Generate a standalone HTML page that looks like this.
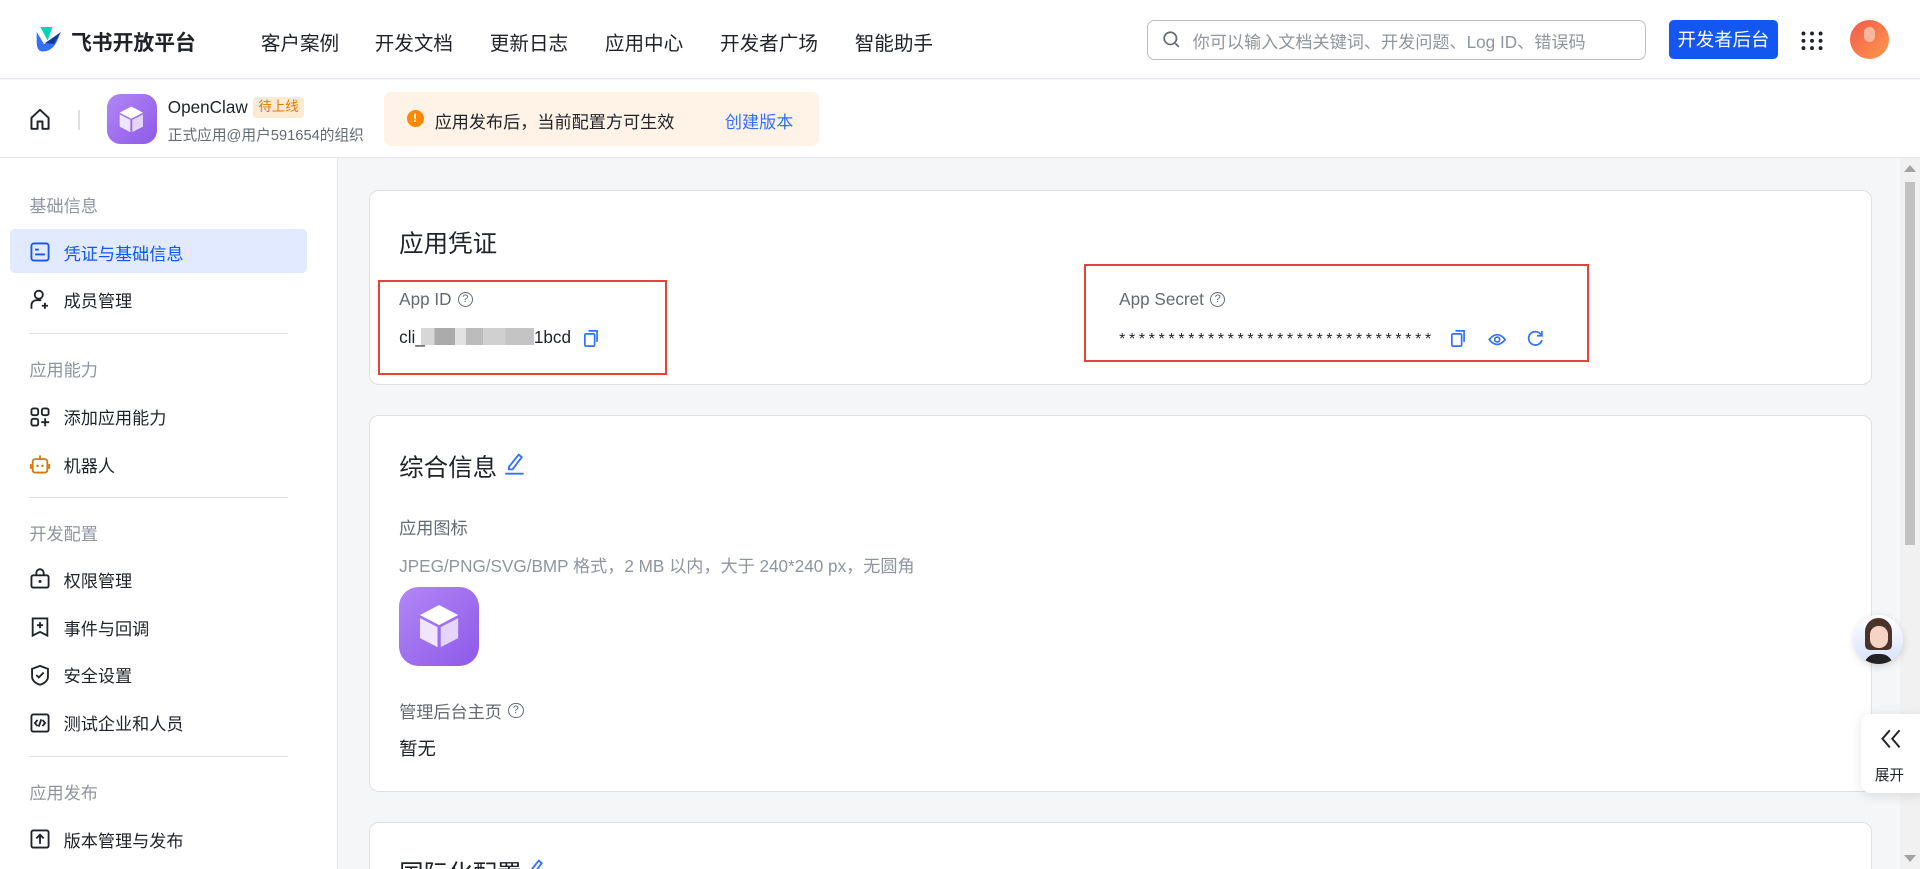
<!DOCTYPE html>
<html><head><meta charset="utf-8"><style>
html,body{margin:0;padding:0;overflow:hidden;width:1920px;height:869px;background:#f5f6f7}
#r{zoom:1.22449;position:relative;width:1568px;height:709.5px;overflow:hidden;font-family:"Liberation Sans","Noto Sans CJK SC",sans-serif;color:#1f2329}
.a{position:absolute}
.hdr{left:0;top:0;width:1568px;height:64px;background:#fff;border-bottom:1px solid #e5e6eb}
.nav{top:22px;font-size:16px;color:#1f2329}
.bar2{left:0;top:65px;width:1568px;height:63px;background:#fff;border-bottom:1px solid #e5e6eb}
.side{left:0;top:129px;width:275px;height:581px;background:#fff;border-right:1px solid #e5e6eb}
.sec{left:24px;font-size:14px;color:#8f959e}
.it{left:24px;font-size:14px;color:#1f2329;display:flex;align-items:center}
.it svg{margin-right:10px}
.dv{left:24px;width:211px;height:1px;background:#dee0e3}
.card{left:301px;width:1226px;background:#fff;border:1px solid #dee0e3;border-radius:8px}
.t{font-size:20px;color:#1f2329}
.lab{font-size:14px;color:#646a73;display:flex;align-items:center}
.red{border:2px solid #e8423a;box-sizing:border-box}
.q{display:inline-block;width:11px;height:11px;border:1.3px solid #646a73;border-radius:50%;font-size:9px;line-height:11px;text-align:center;margin-left:5px;color:#646a73}
</style></head><body><div id="r">
<div class="a hdr"></div>
<svg class="a" style="left:27px;top:22px" width="24" height="22" viewBox="0 0 24 22"><path d="M3 4 L9 14 L22 5 Q18 20 8 20 Q3 20 3 12Z" fill="#3370ff"/><path d="M6 0 L16 0 L12 11 Z" fill="#00d6b9"/><path d="M10 13 L23 4 L17 14Z" fill="#133c9a"/></svg>
<div class="a" style="left:58px;top:21px;font-size:17px;font-weight:bold">飞书开放平台</div>
<div class="a nav" style="left:213px">客户案例</div>
<div class="a nav" style="left:306px">开发文档</div>
<div class="a nav" style="left:400px">更新日志</div>
<div class="a nav" style="left:494px">应用中心</div>
<div class="a nav" style="left:588px">开发者广场</div>
<div class="a nav" style="left:698px">智能助手</div>
<div class="a" style="left:937px;top:16px;width:406px;height:31px;border:1px solid #bbbfc4;border-radius:6px;background:#fff"></div>
<svg class="a" style="left:950px;top:25px" width="14" height="14" viewBox="0 0 14 14"><circle cx="6" cy="6" r="5" fill="none" stroke="#646a73" stroke-width="1.4"/><path d="M10 10 L13 13" stroke="#646a73" stroke-width="1.4"/></svg>
<div class="a" style="left:974px;top:23px;font-size:14px;color:#8f959e">你可以输入文档关键词、开发问题、Log ID、错误码</div>
<div class="a" style="left:1363px;top:16px;width:89px;height:32px;background:#1456f0;border-radius:4px;color:#fff;font-size:15px;line-height:32px;text-align:center">开发者后台</div>
<svg class="a" style="left:1471px;top:25px" width="18" height="16" viewBox="0 0 18 16"><g fill="#1f2329"><circle cx="2" cy="2" r="1.6"/><circle cx="9" cy="2" r="1.6"/><circle cx="16" cy="2" r="1.6"/><circle cx="2" cy="8" r="1.6"/><circle cx="9" cy="8" r="1.6"/><circle cx="16" cy="8" r="1.6"/><circle cx="2" cy="14" r="1.6"/><circle cx="9" cy="14" r="1.6"/><circle cx="16" cy="14" r="1.6"/></g></svg>
<div class="a" style="left:1511px;top:16px;width:32px;height:32px;border-radius:50%;background:linear-gradient(135deg,#f4584a,#fd9b4e)"><div style="margin:6px auto 0;width:9px;height:12px;border-radius:5px;background:#fbb79e"></div></div>

<div class="a bar2"></div>
<svg class="a" style="left:24px;top:88px" width="18" height="19" viewBox="0 0 18 19"><path d="M2 8 L9 1.5 L16 8 V17 H11 V11 H7 V17 H2Z" fill="none" stroke="#1f2329" stroke-width="1.6" stroke-linejoin="round"/></svg>
<div class="a" style="left:64px;top:90px;width:1px;height:16px;background:#dee0e3"></div>
<div class="a" style="left:87px;top:77px;width:41px;height:41px;border-radius:11px;background:linear-gradient(135deg,#b187f5,#8e59e8)"></div>
<svg class="a" style="left:95px;top:85px" width="25" height="25" viewBox="0 0 25 25"><path d="M12.5 2 L22 7 L12.5 12 L3 7Z" fill="#fff"/><path d="M3 8.5 L11.7 13 V23 L3 18.5Z" fill="#efe6fd"/><path d="M22 8.5 L13.3 13 V23 L22 18.5Z" fill="#e4d6fb"/></svg>
<div class="a" style="left:137px;top:79px;font-size:14px">OpenClaw</div>
<div class="a" style="left:207px;top:79px;padding:0 4px;background:#feead2;color:#de7802;font-size:11px;line-height:17px;border-radius:3px">待上线</div>
<div class="a" style="left:137px;top:101px;font-size:12px;color:#646a73">正式应用@用户591654的组织</div>
<div class="a" style="left:314px;top:75px;width:355px;height:44px;background:#fef3e6;border-radius:6px"></div>
<div class="a" style="left:332px;top:90px;width:14px;height:14px;border-radius:50%;background:#ff8800;color:#fff;font-size:10px;line-height:14px;text-align:center;font-weight:bold">!</div>
<div class="a" style="left:355px;top:88px;font-size:14px">应用发布后，当前配置方可生效</div>
<div class="a" style="left:592px;top:88px;font-size:14px;color:#3370ff">创建版本</div>

<div class="a side"></div>
<div class="a sec" style="top:157px">基础信息</div>
<div class="a" style="left:8px;top:187px;width:243px;height:36px;background:#e1eaff;border-radius:4px"></div>
<div class="a it" style="top:196px;color:#1456f0"><svg width="18" height="18" viewBox="0 0 18 18"><rect x="2" y="2" width="14" height="14" rx="2" fill="none" stroke="#1456f0" stroke-width="1.5"/><path d="M5 7h3M5 11h8" stroke="#1456f0" stroke-width="1.5"/></svg>凭证与基础信息</div>
<div class="a it" style="top:234px"><svg width="18" height="18" viewBox="0 0 18 18"><circle cx="8" cy="5.5" r="3.3" fill="none" stroke="#1f2329" stroke-width="1.5"/><path d="M2 17v-3a4 4 0 0 1 4-4h4M13 12v5M10.5 14.5h5" fill="none" stroke="#1f2329" stroke-width="1.5"/></svg>成员管理</div>
<div class="a dv" style="top:272px"></div>
<div class="a sec" style="top:291px">应用能力</div>
<div class="a it" style="top:330px"><svg width="18" height="18" viewBox="0 0 18 18"><g fill="none" stroke="#1f2329" stroke-width="1.5"><rect x="2" y="2" width="5.5" height="5.5" rx="1.5"/><rect x="10.5" y="2" width="5.5" height="5.5" rx="1.5"/><rect x="2" y="10.5" width="5.5" height="5.5" rx="1.5"/><path d="M13.2 10v6.5M10 13.2h6.5"/></g></svg>添加应用能力</div>
<div class="a it" style="top:369px"><svg width="18" height="18" viewBox="0 0 18 18"><g fill="none" stroke="#d6780a" stroke-width="1.5"><rect x="3" y="5" width="12" height="11" rx="2"/><path d="M9 2v3M1.5 9v4M16.5 9v4"/></g><circle cx="7" cy="10.5" r="1" fill="#d6780a"/><circle cx="11" cy="10.5" r="1" fill="#d6780a"/></svg>机器人</div>
<div class="a dv" style="top:406px"></div>
<div class="a sec" style="top:425px">开发配置</div>
<div class="a it" style="top:463px"><svg width="18" height="18" viewBox="0 0 18 18"><g fill="none" stroke="#1f2329" stroke-width="1.5"><rect x="2" y="6" width="14" height="10" rx="1.5"/><path d="M6 6V4a3 3 0 0 1 6 0v2"/></g><circle cx="9" cy="11" r="1.2" fill="#1f2329"/></svg>权限管理</div>
<div class="a it" style="top:502px"><svg width="18" height="18" viewBox="0 0 18 18"><g fill="none" stroke="#1f2329" stroke-width="1.5"><path d="M3 2h12v14l-6-3-6 3z"/><path d="M9 5v5M6.5 7.5h5"/></g></svg>事件与回调</div>
<div class="a it" style="top:541px"><svg width="18" height="18" viewBox="0 0 18 18"><g fill="none" stroke="#1f2329" stroke-width="1.5"><path d="M9 1.5l6.5 2.5v6c0 4-3.5 6-6.5 7-3-1-6.5-3-6.5-7V4z"/><path d="M6 9l2 2 4-4"/></g></svg>安全设置</div>
<div class="a it" style="top:580px"><svg width="18" height="18" viewBox="0 0 18 18"><g fill="none" stroke="#1f2329" stroke-width="1.5"><rect x="2" y="2" width="14" height="14" rx="1.5"/><path d="M7 6.5L4.8 9 7 11.5M11 6.5l2.2 2.5-2.2 2.5M10 6l-2 6"/></g></svg>测试企业和人员</div>
<div class="a dv" style="top:617px"></div>
<div class="a sec" style="top:636px">应用发布</div>
<div class="a it" style="top:675px"><svg width="18" height="18" viewBox="0 0 18 18"><g fill="none" stroke="#1f2329" stroke-width="1.5"><rect x="2" y="2" width="14" height="14" rx="1.5"/><path d="M9 13V6M6 8.5L9 5.5l3 3"/></g></svg>版本管理与发布</div>

<div class="a card" style="top:155px;height:158px"></div>
<div class="a t" style="left:326px;top:184px">应用凭证</div>
<div class="a red" style="left:309px;top:229px;width:236px;height:77px"></div>
<div class="a lab" style="left:326px;top:236px">App ID<span class="q">?</span></div>
<div class="a" style="left:326px;top:267px;font-size:14px">cli_</div>
<div class="a" style="left:344px;top:268px;width:92px;height:14px;background:linear-gradient(90deg,#d7d7d7 0 12%,#ababab 12% 30%,#e2e2e2 30% 40%,#bcbcbc 40% 55%,#d0d0d0 55% 75%,#c4c4c4 75% 100%)"></div>
<div class="a" style="left:436px;top:267px;font-size:14px">1bcd</div>
<svg class="a" style="left:476px;top:269px" width="14" height="15" viewBox="0 0 14 15"><g fill="none" stroke="#3370ff" stroke-width="1.4"><rect x="1.5" y="4" width="8" height="10" rx="1"/><path d="M4.5 1.5h7v9"/></g></svg>
<div class="a red" style="left:885px;top:216px;width:413px;height:80px"></div>
<div class="a lab" style="left:914px;top:236px">App Secret<span class="q">?</span></div>
<div class="a" style="left:914px;top:270px;font-size:13px;letter-spacing:3px;color:#1f2329">********************************</div>
<svg class="a" style="left:1184px;top:269px" width="14" height="15" viewBox="0 0 14 15"><g fill="none" stroke="#3370ff" stroke-width="1.4"><rect x="1.5" y="4" width="8" height="10" rx="1"/><path d="M4.5 1.5h7v9"/></g></svg>
<svg class="a" style="left:1215px;top:270px" width="15" height="14" viewBox="0 0 15 14"><g fill="none" stroke="#3370ff" stroke-width="1.4"><path d="M1 7Q7.5-1 14 7Q7.5 15 1 7Z"/><circle cx="7.5" cy="7" r="2"/></g></svg>
<svg class="a" style="left:1246px;top:269px" width="15" height="15" viewBox="0 0 15 15"><g fill="none" stroke="#3370ff" stroke-width="1.4"><path d="M12.5 5A5.5 5.5 0 1 0 13 9"/><path d="M13 1.5V5.5H9"/></g></svg>

<div class="a card" style="top:339px;height:306px"></div>
<div class="a t" style="left:326px;top:367px">综合信息</div>
<svg class="a" style="left:412px;top:368px" width="18" height="20" viewBox="0 0 18 20"><g fill="none" stroke="#3370ff" stroke-width="1.5"><path d="M4 13L12 3l2.5 2L7 15H4z"/><path d="M1 18.5h15"/></g></svg>
<div class="a" style="left:326px;top:420px;font-size:14px;color:#646a73">应用图标</div>
<div class="a" style="left:326px;top:451px;font-size:14px;color:#8f959e">JPEG/PNG/SVG/BMP 格式，2 MB 以内，大于 240*240 px，无圆角</div>
<div class="a" style="left:326px;top:479px;width:65px;height:65px;border-radius:16px;background:linear-gradient(135deg,#b187f5,#8e59e8)"></div>
<svg class="a" style="left:338px;top:491px" width="41" height="41" viewBox="0 0 25 25"><path d="M12.5 2 L22 7 L12.5 12 L3 7Z" fill="#fff"/><path d="M3 8.5 L11.7 13 V23 L3 18.5Z" fill="#efe6fd"/><path d="M22 8.5 L13.3 13 V23 L22 18.5Z" fill="#e4d6fb"/></svg>
<div class="a lab" style="left:326px;top:570px">管理后台主页<span class="q">?</span></div>
<div class="a" style="left:326px;top:600px;font-size:15px">暂无</div>

<div class="a card" style="top:671px;height:100px"></div>
<div class="a t" style="left:326px;top:698px">国际化配置</div>
<svg class="a" style="left:428px;top:700px" width="18" height="20" viewBox="0 0 18 20"><path d="M4 13L12 3l2.5 2L7 15H4z" fill="none" stroke="#3370ff" stroke-width="1.5"/></svg>

<div class="a" style="left:1552px;top:129px;width:16px;height:581px;background:#f1f1f1"></div>
<div class="a" style="left:1556px;top:149px;width:8px;height:296px;background:#c1c1c1"></div>
<div class="a" style="left:1555px;top:135px;width:0;height:0;border-left:5px solid transparent;border-right:5px solid transparent;border-bottom:6px solid #a3a3a3"></div>
<div class="a" style="left:1555px;top:698px;width:0;height:0;border-left:5px solid transparent;border-right:5px solid transparent;border-top:6px solid #a3a3a3"></div>

<div class="a" style="left:1514px;top:502px;width:40px;height:40px;border-radius:50%;background:linear-gradient(#fff,#d6e2ff);box-shadow:0 2px 6px rgba(0,0,0,.15);overflow:hidden">
<div style="position:absolute;left:9px;top:3px;width:22px;height:26px;border-radius:11px 11px 4px 4px;background:#4a3329"></div>
<div style="position:absolute;left:13px;top:9px;width:15px;height:18px;border-radius:7px;background:#f6d3c2"></div>
<div style="position:absolute;left:8px;top:32px;width:24px;height:12px;border-radius:10px 10px 0 0;background:#222"></div></div>
<div class="a" style="left:1520px;top:583px;width:52px;height:65px;background:#fff;border-radius:8px 0 0 8px;box-shadow:0 2px 10px rgba(0,0,0,.1)"></div>
<svg class="a" style="left:1535px;top:595px" width="18" height="16" viewBox="0 0 18 16"><g fill="none" stroke="#1f2329" stroke-width="1.6"><path d="M8 1L2 8l6 7M16 1l-6 7 6 7"/></g></svg>
<div class="a" style="left:1531px;top:624px;font-size:12px">展开</div>
</div></body></html>
